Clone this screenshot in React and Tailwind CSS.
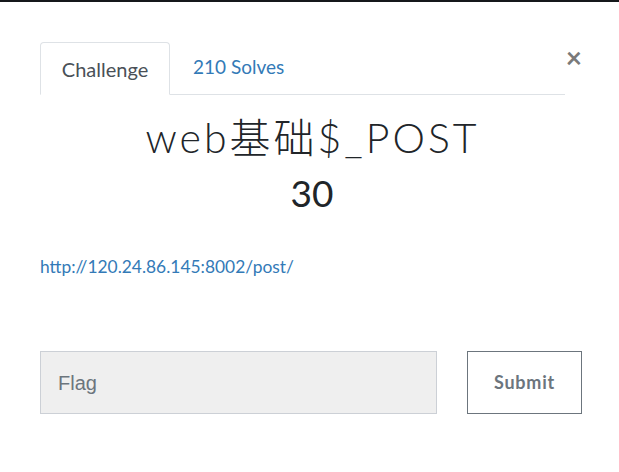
export default function App() {
  return (
    <div className="w-[619px] h-[472px] bg-white relative overflow-hidden" style={{ fontFamily: "Lato, 'Noto Sans', sans-serif" }}>
      <div className="h-[2px] bg-[#15181b]" />
      <div className="pl-[40px] pr-[37px] pt-[40px]">
        <div className="flex items-start">
          <div className="flex-1 flex items-end h-[53px] border-b border-[#dee2e6] w-[525px]">
            <div className="h-[53px] w-[130px] border border-[#dee2e6] border-b-white rounded-t-[4px] -mb-px flex items-center justify-center text-[20px] text-[#495057] bg-white">
              Challenge
            </div>
            <div className="h-[53px] px-[23px] flex items-center text-[19px] text-[#337ab7]">210 Solves</div>
          </div>
          <div className="w-[17px] pt-[1px] text-[#7a7a7a] text-[28px] font-bold leading-none text-right">×</div>
        </div>
        <div className="text-center mt-[19px] text-[41px] font-light text-[#212529] leading-[48px] tracking-[3px] pl-[3px]" style={{ fontFamily: "'Lato', 'Noto Sans CJK SC', sans-serif" }}>
          web基础$_POST
        </div>
        <div className="text-center mt-[9px] text-[37px] text-[#212529] leading-[44px] pl-[2px]">30</div>
        <div className="mt-[40px] text-[17.4px] text-[#337ab7] leading-[24px]">http://120.24.86.145:8002/post/</div>
        <div className="mt-[72px] flex items-stretch">
          <div className="w-[397px] h-[63px] bg-[#efefef] border border-[#ccd0d6] flex items-center pl-[17px] text-[20px] text-[#6c757d]" style={{ fontFamily: "'Liberation Sans', Arial, sans-serif" }}>
            Flag
          </div>
          <div className="ml-[30px] w-[115px] h-[63px] border border-[#6c757d] flex items-center justify-center text-[18px] font-bold text-[#6c757d] tracking-[0.8px]">
            Submit
          </div>
        </div>
      </div>
    </div>
  );
}
